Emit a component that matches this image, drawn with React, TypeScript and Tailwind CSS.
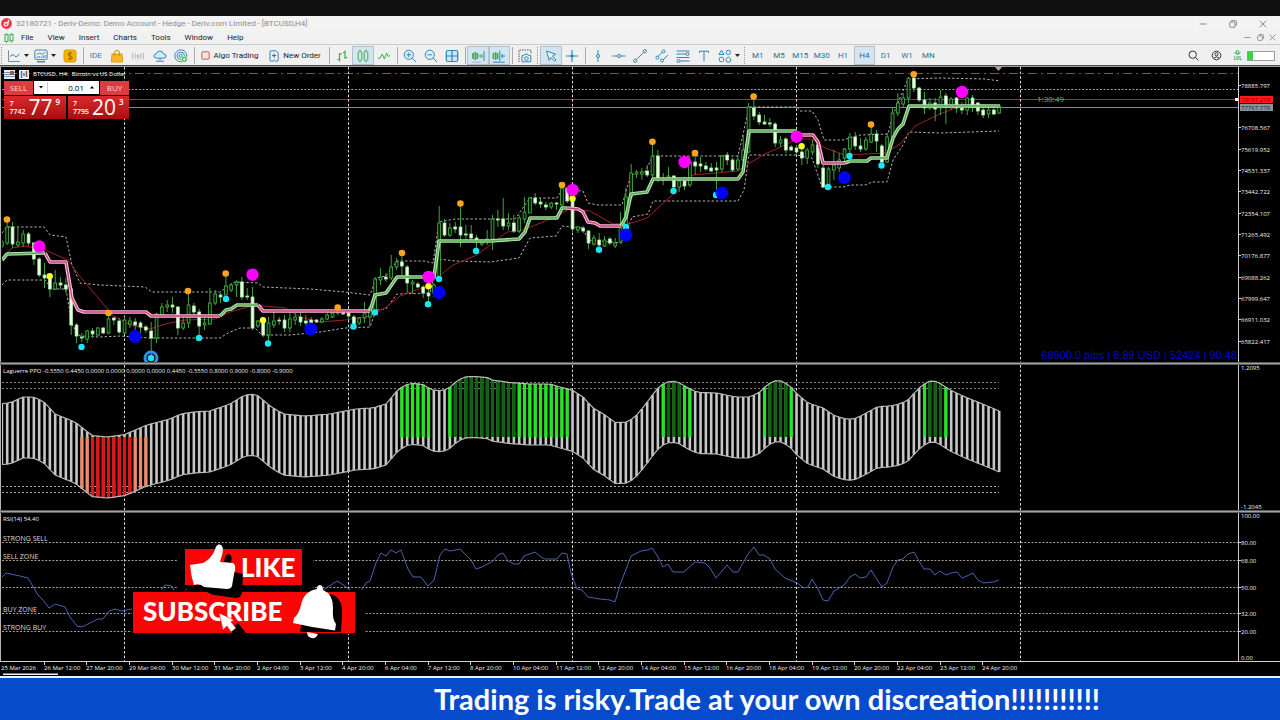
import React from 'react';

type Point = [number, number];
// high, body top, body bottom, low, 1 = filled body
type Candle = [number, number, number, number, number];

const UI_FONT = "font-[Roboto,'Open_Sans',sans-serif]";
const CHART_FONT = "font-['Open_Sans','Noto_Sans',sans-serif]";

const FIRST_X = 7.2;
const STEP = 16 / 3;
const barX = (i: number) => FIRST_X + i * STEP;
const path = (points: Point[]) => points.map((p) => p.join(',')).join(' ');

// First candle sits one step left of FIRST_X
const CANDLES: Candle[] = [
  [240, 242, 246, 248, 0], [221, 227, 243, 245, 0], [222, 227, 244, 248, 1], [227, 242, 245, 247, 0],
  [230, 234, 243, 247, 0], [232, 234, 243, 246, 1], [242, 243, 259, 265, 1], [257, 259, 275, 277, 1],
  [263, 275, 278, 288, 1], [275, 277, 289, 297, 1], [270, 283, 289, 290, 0], [277, 283, 285, 289, 1],
  [278, 285, 289, 293, 1], [287, 289, 325, 335, 1], [323, 325, 336, 343, 1], [333, 337, 338, 342, 1],
  [330, 331, 339, 343, 0], [328, 331, 334, 338, 1], [327, 328, 335, 336, 0], [327, 328, 333, 334, 1],
  [315, 319, 333, 334, 0], [317, 318, 320, 325, 1], [318, 321, 332, 334, 1], [317, 320, 333, 334, 0],
  [317, 321, 324, 328, 0], [318, 322, 325, 330, 1], [321, 323, 327, 333, 1], [325, 327, 330, 333, 1],
  [322, 331, 338, 355, 1], [313, 314, 338, 343, 0], [303, 307, 315, 317, 0], [300, 305, 307, 312, 0],
  [297, 305, 307, 313, 1], [306, 307, 328, 335, 1], [315, 323, 328, 330, 0], [291, 305, 323, 328, 0],
  [303, 306, 312, 317, 1], [309, 312, 326, 338, 1], [315, 323, 325, 330, 0], [288, 303, 324, 325, 0],
  [290, 294, 303, 305, 0], [293, 295, 297, 303, 1], [275, 286, 295, 297, 0], [283, 285, 290, 292, 0],
  [280, 282, 285, 297, 0], [277, 282, 297, 300, 1], [288, 296, 297, 300, 1], [287, 297, 328, 330, 1],
  [320, 321, 326, 328, 0], [318, 321, 335, 337, 1], [317, 323, 335, 343, 0], [312, 321, 325, 328, 0],
  [317, 320, 321, 325, 1], [315, 320, 328, 332, 1], [312, 319, 328, 332, 0], [313, 317, 320, 325, 0],
  [312, 317, 322, 326, 1], [315, 321, 323, 327, 1], [317, 320, 323, 325, 1], [319, 320, 322, 323, 1],
  [317, 319, 322, 323, 0], [313, 315, 319, 320, 0], [312, 313, 317, 318, 0], [307, 311, 313, 315, 0],
  [312, 313, 314, 315, 1], [312, 313, 316, 320, 1], [315, 317, 324, 326, 1], [317, 318, 323, 325, 0],
  [302, 313, 318, 323, 0], [306, 308, 317, 326, 0], [277, 279, 312, 313, 0], [268, 277, 280, 285, 0],
  [273, 277, 279, 282, 1], [255, 267, 278, 280, 0], [258, 262, 267, 270, 0], [253, 262, 266, 277, 1],
  [265, 267, 283, 293, 1], [280, 282, 284, 294, 0], [282, 284, 287, 288, 1], [285, 287, 293, 298, 1],
  [287, 293, 296, 303, 1], [283, 285, 293, 297, 0], [206, 223, 278, 278, 0], [219, 223, 235, 237, 1],
  [223, 228, 235, 237, 0], [222, 227, 229, 233, 1], [204, 227, 235, 247, 1], [225, 234, 235, 242, 1],
  [225, 234, 238, 242, 1], [235, 238, 241, 249, 1], [239, 241, 244, 246, 0], [230, 239, 241, 245, 0],
  [215, 219, 239, 250, 0], [210, 219, 220, 227, 1], [198, 219, 226, 230, 1], [213, 223, 226, 230, 0],
  [215, 223, 231, 233, 1], [215, 218, 231, 233, 0], [197, 212, 219, 223, 0], [197, 198, 213, 213, 0],
  [193, 198, 203, 205, 1], [198, 202, 204, 208, 1], [202, 205, 207, 210, 1], [202, 203, 207, 209, 0],
  [202, 203, 204, 210, 1], [187, 188, 205, 207, 0], [187, 188, 201, 203, 1], [190, 193, 229, 232, 1],
  [226, 227, 230, 233, 0], [226, 228, 231, 233, 1], [230, 231, 243, 249, 1], [235, 238, 244, 246, 0],
  [233, 240, 245, 249, 1], [236, 240, 246, 247, 0], [237, 239, 243, 245, 1], [238, 243, 246, 248, 0],
  [212, 227, 242, 243, 0], [188, 197, 225, 232, 0], [164, 173, 197, 198, 0], [170, 172, 174, 178, 0],
  [168, 172, 174, 180, 0], [165, 171, 175, 177, 1], [142, 156, 175, 178, 0], [150, 156, 178, 182, 1],
  [173, 178, 180, 185, 0], [167, 176, 178, 180, 0], [175, 176, 187, 190, 1], [178, 181, 187, 192, 0],
  [177, 181, 186, 190, 1], [157, 162, 185, 187, 0], [153, 162, 166, 175, 1], [157, 164, 166, 172, 1],
  [162, 166, 169, 171, 1], [163, 168, 171, 172, 1], [162, 168, 170, 193, 1], [155, 156, 169, 172, 0],
  [152, 155, 160, 165, 1], [158, 160, 170, 172, 1], [155, 160, 169, 171, 0], [135, 150, 160, 162, 0],
  [103, 107, 152, 153, 0], [97, 108, 116, 120, 1], [112, 115, 122, 125, 1], [115, 122, 124, 125, 1],
  [118, 123, 124, 127, 1], [122, 124, 143, 147, 1], [136, 140, 143, 147, 0], [137, 139, 150, 153, 1],
  [145, 147, 150, 151, 1], [145, 148, 152, 154, 1], [148, 152, 158, 165, 1], [148, 150, 158, 164, 0],
  [140, 145, 152, 155, 0], [143, 145, 164, 168, 1], [165, 168, 187, 188, 1], [167, 169, 186, 188, 0],
  [150, 165, 170, 180, 0], [153, 160, 168, 172, 0], [148, 149, 158, 162, 0], [133, 137, 149, 153, 0],
  [132, 137, 146, 150, 1], [138, 146, 149, 152, 1], [137, 140, 149, 151, 0], [125, 134, 142, 143, 0],
  [130, 134, 141, 152, 1], [144, 146, 162, 165, 1], [133, 137, 162, 163, 0], [108, 113, 137, 138, 0],
  [93, 103, 113, 116, 0], [93, 98, 104, 107, 0], [77, 78, 98, 103, 0], [77, 78, 88, 92, 1],
  [87, 88, 100, 102, 1], [92, 100, 108, 114, 1], [98, 103, 108, 110, 0], [98, 103, 109, 121, 1],
  [90, 97, 108, 115, 0], [93, 96, 107, 124, 1], [97, 99, 107, 110, 0], [97, 98, 108, 113, 1],
  [102, 108, 110, 114, 1], [97, 98, 110, 115, 0], [95, 98, 107, 112, 1], [102, 103, 111, 115, 1],
  [108, 110, 115, 118, 1], [108, 110, 114, 118, 0], [108, 110, 114, 115, 1], [105, 106, 113, 114, 0],
];

const TREND: { up: boolean; points: Point[] }[] = [
  { up: true, points: [[2, 260], [7, 254], [45, 253]] },
  { up: false, points: [[45, 253], [50, 262], [66, 262], [72, 298], [78, 310], [84, 312], [146, 312], [151, 316], [220, 316]] },
  { up: true, points: [[220, 316], [226, 310], [231, 309], [237, 305], [258, 305]] },
  { up: false, points: [[258, 305], [263, 311], [370, 311]] },
  { up: true, points: [[370, 311], [375, 295], [386, 293], [397, 277], [434, 277], [439, 241], [490, 241], [519, 239], [525, 232], [530, 218], [557, 218], [562, 208], [567, 208]] },
  { up: false, points: [[567, 208], [578, 209], [583, 212], [588, 222], [595, 223], [600, 226], [621, 226]] },
  { up: true, points: [[621, 226], [626, 217], [631, 194], [647, 192], [653, 179], [738, 179], [743, 172], [749, 131], [797, 131]] },
  { up: false, points: [[797, 135], [813, 135], [818, 142], [823, 163], [845, 163]] },
  { up: true, points: [[845, 163], [850, 161], [867, 161], [871, 158], [887, 158], [893, 138], [898, 129], [903, 124], [909, 106], [1000, 106]] },
];

const MA: Point[] = [
  [2, 258], [12, 248], [25, 246], [45, 250], [68, 260], [78, 274], [100, 300], [112, 315], [130, 325], [150, 329],
  [165, 324], [185, 320], [215, 319], [230, 312], [255, 305], [285, 308], [300, 317], [320, 322], [345, 320],
  [370, 316], [385, 308], [400, 296], [425, 287], [453, 265], [477, 255], [507, 232], [520, 231], [543, 222],
  [570, 209], [590, 211], [613, 224], [632, 223], [647, 218], [670, 197], [693, 175], [738, 171], [750, 163],
  [765, 154], [785, 145], [797, 139], [812, 139], [825, 148], [845, 155], [885, 153], [900, 144], [915, 126],
  [940, 114], [965, 104], [1000, 106],
];

const UPPER_BAND: Point[] = [
  [2, 233], [7, 227], [44, 227], [50, 235], [66, 237], [72, 265], [80, 283], [100, 285], [145, 287], [152, 292],
  [220, 292], [235, 282], [258, 283], [263, 287], [310, 289], [345, 292], [370, 295], [376, 278], [386, 276],
  [397, 261], [424, 261], [433, 263], [439, 222], [455, 219], [515, 219], [530, 198], [557, 198], [562, 190],
  [583, 191], [588, 203], [598, 205], [622, 205], [631, 175], [645, 172], [653, 156], [738, 156], [744, 130],
  [749, 107], [797, 107], [800, 111], [812, 111], [818, 120], [824, 140], [843, 140], [860, 135], [888, 134],
  [893, 115], [900, 98], [908, 79], [940, 78], [985, 79], [1000, 81],
];

const LOWER_BAND: Point[] = [
  [2, 285], [7, 280], [45, 280], [52, 289], [66, 289], [72, 325], [80, 336], [100, 337], [120, 336], [150, 338],
  [220, 338], [228, 333], [240, 328], [255, 328], [262, 335], [290, 335], [320, 332], [345, 328], [370, 327],
  [376, 310], [386, 309], [397, 294], [430, 293], [438, 259], [455, 261], [490, 262], [519, 258], [530, 238],
  [556, 236], [562, 226], [583, 228], [588, 240], [622, 243], [632, 217], [648, 214], [653, 201], [738, 201],
  [744, 190], [749, 155], [797, 155], [812, 158], [822, 187], [843, 187], [850, 185], [865, 185], [872, 182],
  [887, 182], [893, 160], [903, 145], [909, 132], [940, 133], [970, 132], [999, 131],
];

const MARKERS: { color: string; r: number; points: Point[] }[] = [
  {
    color: '#ffa31a',
    r: 3.3,
    points: [[7, 219.5], [108.5, 313], [188, 291], [225.7, 273.5], [337.7, 307.5], [402, 253], [460.4, 203.5], [562, 185], [652.4, 141.7], [695, 153], [753.6, 96.5], [871, 124.5], [913.7, 74.3]],
  },
  {
    color: '#19e6f5',
    r: 3.2,
    points: [[81.5, 347], [151, 358], [199, 338], [226, 299], [268, 343.5], [353.5, 326.5], [375, 312.4], [428, 304.3], [439, 279], [476, 251], [599, 249.7], [626, 227], [673.5, 191], [716, 195], [828, 187], [849.5, 156], [881.5, 165.5]],
  },
  { color: '#ffff1f', r: 3.2, points: [[49.7, 276.3], [263, 320.3], [428.5, 286.3], [572.5, 198.5], [801.6, 146.2]] },
  { color: '#ff00ff', r: 6.2, points: [[39.3, 246.5], [252.5, 274.7], [428.6, 277], [572.6, 190], [684.6, 162], [796.6, 136.7], [962, 92]] },
  { color: '#0000ff', r: 6.4, points: [[135, 336.5], [310.8, 329], [439, 292.5], [626, 235], [721.8, 193], [844.5, 177.7]] },
];

const PPO: Point[] = [
  [2, 403.5], [10, 403], [23, 397], [33, 397], [43, 401], [55, 414], [75, 422], [92, 435.5], [108, 437], [125, 434.5],
  [147, 425], [170, 419], [181, 414], [195, 412], [210, 411], [230, 404], [243, 396], [250, 394], [257, 395],
  [270, 406], [283, 414], [305, 416], [330, 414], [355, 409], [373, 408], [386, 404], [397, 391], [405, 385],
  [412, 383.5], [422, 384], [432, 390], [442, 391], [449, 388], [458, 380], [465, 377], [475, 376.5], [487, 377.5],
  [492, 380], [510, 382.5], [530, 384], [550, 384], [560, 387], [572, 390], [583, 397], [593, 408], [605, 415],
  [615, 422.5], [628, 422], [638, 414], [648, 401], [657, 389], [665, 382.5], [672, 381], [678, 382], [688, 388],
  [698, 392.5], [717, 393], [735, 397], [750, 397], [760, 392], [768, 384], [776, 380.5], [782, 381], [790, 386],
  [797, 394], [808, 403], [823, 408], [835, 416], [848, 419.5], [857, 418], [868, 412], [878, 406.5], [890, 406],
  [900, 404], [908, 400], [918, 389], [927, 382], [932, 380.5], [938, 382], [950, 390], [965, 397], [985, 405], [999, 411],
];

const PPO_BAND = 61;
const PPO_ZERO = 437;
const PPO_ZONES: { from: number; to: number; color: string; below?: boolean }[] = [
  { from: 14, to: 15, color: '#ee8a64', below: true },
  { from: 16, to: 23, color: '#e81212', below: true },
  { from: 24, to: 26, color: '#ee8a64', below: true },
  { from: 74, to: 79, color: '#1fe81f' },
  { from: 83, to: 83, color: '#1fe81f' },
  { from: 84, to: 95, color: '#0b650b' },
  { from: 96, to: 105, color: '#1fe81f' },
  { from: 123, to: 123, color: '#1fe81f' },
  { from: 124, to: 126, color: '#0b650b' },
  { from: 127, to: 128, color: '#1fe81f' },
  { from: 142, to: 142, color: '#1fe81f' },
  { from: 143, to: 146, color: '#0b650b' },
  { from: 147, to: 147, color: '#1fe81f' },
  { from: 172, to: 172, color: '#1fe81f' },
  { from: 173, to: 175, color: '#0b650b' },
  { from: 176, to: 176, color: '#1fe81f' },
];

const RSI: Point[] = [
  [2, 577], [6, 573], [20, 576], [28, 578], [38, 595], [43, 600], [49, 608], [55, 604], [65, 607], [70, 617], [77, 626],
  [82, 627], [90, 623], [98, 619], [103, 619], [109, 611], [115, 609], [121, 611], [132, 609], [145, 610], [160, 592],
  [165, 585], [172, 586], [178, 600], [184, 600], [187, 587], [195, 586], [240, 590], [300, 600], [320, 592], [337, 581],
  [345, 586], [355, 594], [361, 591], [366, 583], [370, 581], [376, 563], [381, 553], [386, 556], [391, 550], [396, 553],
  [401, 550], [408, 569], [413, 577], [421, 577], [428, 586], [434, 580], [440, 555], [445, 549], [450, 551], [460, 549],
  [466, 555], [471, 560], [476, 569], [482, 567], [493, 561], [498, 555], [503, 553], [508, 561], [514, 564], [519, 564],
  [524, 556], [535, 552], [541, 557], [545, 559], [557, 559], [562, 553], [567, 554], [571, 573], [577, 589], [582, 590],
  [588, 597], [600, 599], [610, 600], [615, 602], [620, 585], [631, 556], [641, 551], [648, 550], [652, 548], [658, 557],
  [663, 567], [668, 564], [673, 572], [684, 572], [695, 562], [705, 563], [710, 568], [716, 578], [727, 565], [733, 572],
  [738, 572], [748, 554], [754, 547], [759, 555], [764, 555], [770, 559], [775, 569], [785, 578], [797, 583], [804, 588],
  [808, 587], [812, 579], [818, 589], [823, 600], [828, 601], [834, 591], [844, 585], [850, 577], [855, 574], [860, 578],
  [866, 577], [871, 570], [876, 578], [882, 587], [887, 583], [893, 567], [898, 560], [903, 559], [908, 554], [914, 552],
  [919, 561], [924, 569], [930, 569], [935, 575], [940, 571], [946, 575], [951, 573], [957, 572], [962, 578], [967, 576],
  [973, 573], [978, 580], [983, 583], [993, 582], [999, 580],
];

const PRICES: [string, number][] = [
  ['78885.797', 86], ['76708.567', 128], ['75619.952', 150], ['74531.337', 171], ['73442.722', 192], ['72354.107', 214],
  ['71265.492', 235], ['70176.877', 256], ['69088.262', 278], ['67999.647', 299], ['66911.032', 320], ['65822.417', 342],
];

const RSI_LEVELS: { y: number; value: string; label?: string }[] = [
  { y: 542.5, value: '80.00', label: 'STRONG SELL' },
  { y: 560.5, value: '68.00', label: 'SELL ZONE' },
  { y: 587.5, value: '50.00' },
  { y: 613.5, value: '32.00', label: 'BUY ZONE' },
  { y: 631.5, value: '20.00', label: 'STRONG BUY' },
];

const DATES = [
  '25 Mar 2026', '26 Mar 12:00', '27 Mar 20:00', '29 Mar 04:00', '30 Mar 12:00', '31 Mar 20:00', '2 Apr 04:00', '3 Apr 12:00',
  '4 Apr 20:00', '6 Apr 04:00', '7 Apr 12:00', '8 Apr 20:00', '10 Apr 04:00', '11 Apr 12:00', '12 Apr 20:00', '14 Apr 04:00',
  '15 Apr 12:00', '16 Apr 20:00', '18 Apr 04:00', '19 Apr 12:00', '20 Apr 20:00', '22 Apr 04:00', '23 Apr 12:00', '24 Apr 20:00',
];

const WEEKS = [124.5, 348.5, 572.5, 796.5, 1020.5];
const BLUE = '#2f86b8';
const GREEN = '#35b24a';

function interpolate(points: Point[], x: number) {
  const next = points.findIndex((p) => p[0] >= x);
  if (next < 0) return points[points.length - 1][1];
  if (next === 0) return points[0][1];
  const [x0, y0] = points[next - 1];
  const [x1, y1] = points[next];
  return y0 + ((y1 - y0) * (x - x0)) / (x1 - x0);
}

/* ---------- window chrome ---------- */

const WindowControls: React.FC<{ small?: boolean }> = ({ small }) => {
  const size = small ? 7 : 8;
  return (
    <div className={small ? 'flex w-[36px] justify-between pr-1' : 'flex w-[81px] justify-between pr-[13px]'}>
      <button aria-label="Minimize"><svg width={size} height={size} viewBox="0 0 8 8" stroke="#8a8a8a" fill="none"><path d="M0.5 4H7.5" /></svg></button>
      <button aria-label="Restore"><svg width={size} height={size} viewBox="0 0 8 8" stroke="#8a8a8a" fill="none"><rect x="0.7" y="2" width="5.3" height="5.3" rx="1" /><path d="M2.3 1.8V1.3Q2.3 .6 3 .6H6.4Q7.4 .6 7.4 1.6V5Q7.4 5.6 6.2 5.6" /></svg></button>
      <button aria-label="Close"><svg width={size} height={size} viewBox="0 0 8 8" stroke="#8a8a8a" fill="none"><path d="M0.7 0.7L7.3 7.3M7.3 0.7L0.7 7.3" /></svg></button>
    </div>
  );
};

const TitleBar = () => (
  <header className="flex h-[15px] items-center justify-between bg-[#f3f3f3]">
    <div className="flex items-center gap-1 pl-px">
      <svg width="11" height="11" viewBox="0 0 11 11">
        <circle cx="5.5" cy="5.5" r="5.4" fill="#ec3b48" />
        <path d="M7.6 2L6.6 7.7M6.9 4.6H5Q3.6 4.6 3.3 6.2Q3.1 7.8 4.6 7.8Q6.3 7.8 6.7 6.4" stroke="#fff" strokeWidth="1.2" fill="none" />
      </svg>
      <h1 className="text-[8px] leading-[15px] text-[#8c8c8c]">32180721 - Deriv-Demo: Demo Account - Hedge - Deriv.com Limited - [BTCUSD,H4]</h1>
    </div>
    <WindowControls />
  </header>
);

const MenuBar = () => (
  <div className="flex h-[13px] items-center justify-between bg-[#f1f1f1]">
    <nav className="flex items-center gap-[14px] pl-1 text-[8px] leading-[13px] text-[#1b1b1b]">
      <svg className="-mr-[7px]" width="10" height="10" viewBox="0 0 10 10" fill="none" stroke={GREEN}><path d="M2.5 0V10M7.5 0V10" strokeWidth=".8" /><rect x="1" y="1.6" width="3" height="6.8" fill="#f1f1f1" /><rect x="6" y="1.6" width="3" height="6.2" fill="#f1f1f1" /></svg>
      {['File', 'View', 'Insert', 'Charts', 'Tools', 'Window', 'Help'].map((item) => (
        <button key={item}>{item}</button>
      ))}
    </nav>
    <WindowControls small />
  </div>
);

/* ---------- toolbar ---------- */

const Separator = () => <div className="mr-px ml-[2px] h-[17px] w-px shrink-0 bg-[#a9a9a9]" />;
const Handle = () => <div className="mx-px h-[17px] w-[2px] shrink-0 border-l border-dotted border-[#999]" />;
const Caret = () => <svg className="shrink-0" width="5" height="3" viewBox="0 0 5 3"><path d="M0 0H5L2.5 3Z" fill="#222" /></svg>;

const Glyph: React.FC<{ color?: string; children: React.ReactNode }> = ({ color = BLUE, children }) => (
  <svg className="shrink-0" width="14" height="14" viewBox="0 0 14 14" fill="none" stroke={color}>{children}</svg>
);

const ToolButton: React.FC<{ label: string; pressed?: boolean; className?: string; children: React.ReactNode }> = ({ label, pressed, className = '', children }) => (
  <button
    aria-label={label}
    aria-pressed={pressed}
    className={`flex h-[19px] items-center justify-center border ${pressed ? 'border-[#b4c2cc] bg-[#d5e5f0]' : 'border-transparent'} ${className}`}
  >
    {children}
  </button>
);

const Toolbar = () => (
  <div className="flex h-[21px] items-center overflow-hidden border-t border-[#c9c9c9] bg-[#f0f0f0] pt-px text-[8px] text-[#1b1b1b]">
    <Handle />
    <ToolButton label="Chart type" className="w-[27px] gap-[3px]">
      <Glyph color="#7b8b95"><path d="M1.5 1.5V12.5H13" /><path d="M3 7.5L6 5.5L9 8L12.5 5" stroke={BLUE} /></Glyph>
      <Caret />
    </ToolButton>
    <ToolButton label="Indicators" className="w-[28px] gap-[3px]">
      <Glyph color={BLUE}><rect x=".8" y="1" width="12.4" height="9.6" rx="1.5" /><path d="M3 12.8H11" strokeWidth="1.4" /><path d="M2.6 5.4L5.5 4L8 5.4L11.4 3" stroke="#3f9d8c" /><path d="M3.2 9V7.5M5.2 9V7M7.2 9V7.5M9.2 9V6.5M11 9V6" /></Glyph>
      <Caret />
    </ToolButton>
    <ToolButton label="Symbols" className="w-[22px]">
      <Glyph><rect x="1" y="1" width="12" height="12" rx="2" fill="#f4b400" stroke="#d99c00" /><path d="M9.3 4.8Q8.8 3.8 7 3.8Q4.9 3.8 4.9 5.3Q4.9 6.6 7 6.9Q9.2 7.2 9.2 8.6Q9.2 10.2 7 10.2Q5.1 10.2 4.6 9.1M7 2.8V11.2" stroke="#8a6400" /></Glyph>
    </ToolButton>
    <Separator />
    <div className="grid w-[107px] shrink-0 grid-cols-5">
      <ToolButton label="IDE"><span className="text-[8px] text-[#2f7fae]">IDE</span></ToolButton>
      <ToolButton label="Market"><Glyph><path d="M2 5H12L12.6 13H1.4Z" fill="#f4b82a" stroke="#e0a010" /><path d="M4.6 7V4Q4.6 1.3 7 1.3Q9.4 1.3 9.4 4V7" stroke="#c98e10" /></Glyph></ToolButton>
      <ToolButton label="Signals"><Glyph color="#b3b3b3"><circle cx="7" cy="7" r="1.2" /><path d="M4.5 4.5Q3.3 7 4.5 9.5M9.5 4.5Q10.7 7 9.5 9.5M2.2 3.5Q.2 7 2.2 10.5M11.8 3.5Q13.8 7 11.8 10.5M7 8.2V10.5" /></Glyph></ToolButton>
      <ToolButton label="VPS"><Glyph><path d="M3.8 9.2Q.8 9 .9 6.9Q1 5 3.2 4.8Q4 2 6.8 2Q9.6 2 10.2 4.7Q13 4.8 13.1 7Q13 9.2 10.4 9.2Z" fill="#cfe9f7" /><path d="M7 9.2V11.5M3 12.2H11" /></Glyph></ToolButton>
      <ToolButton label="Community"><Glyph><circle cx="6.8" cy="6.8" r="6" /><circle cx="6.8" cy="6.8" r="3.7" /><circle cx="6.8" cy="6.8" r="1.5" /><circle cx="10.2" cy="10.3" r="3" fill="#35b24a" stroke="#fff" strokeWidth=".6" /><path d="M8.6 10.3H11.8M10.2 8.7V11.9" stroke="#fff" /></Glyph></ToolButton>
    </div>
    <Separator />
    <ToolButton label="Algo Trading" className="w-[67px] gap-1 whitespace-nowrap">
      <svg className="shrink-0" width="9" height="9" viewBox="0 0 9 9"><rect x=".8" y=".8" width="7.4" height="7.4" rx="1" fill="#fbe3e0" stroke="#d9574c" /></svg>
      Algo Trading
    </ToolButton>
    <ToolButton label="New Order" className="w-[64px] gap-1 whitespace-nowrap">
      <svg className="shrink-0" width="10" height="12" viewBox="0 0 10 12" fill="none" stroke={BLUE}><path d="M1 2Q1 .8 2.2 .8H7L9.2 3V10Q9.2 11.2 8 11.2H6M1 2V10Q1 11.2 2.2 11.2H4L6 9.4" /><path d="M3 5.6H7.2M5.1 3.6V7.7" stroke="#1f6fa8" /></svg>
      New Order
    </ToolButton>
    <Separator />
    <div className="grid w-[64px] shrink-0 grid-cols-3">
      <ToolButton label="Bar chart"><Glyph color={GREEN}><path d="M4.5 4V12.5M2.2 10.5H4.5M4.5 5H7M10 1.5V10M7.8 3.5H10M10 8.5H12.4" strokeWidth="1.2" /></Glyph></ToolButton>
      <ToolButton label="Candlesticks" pressed><Glyph color={GREEN}><path d="M4 .5V13.5M10 .5V13.5" /><rect x="2.2" y="2.6" width="3.6" height="8.8" rx="1" fill="#d5e5f0" /><rect x="8.2" y="2.6" width="3.6" height="8.8" rx="1" fill="#d5e5f0" /></Glyph></ToolButton>
      <ToolButton label="Line chart"><Glyph color={GREEN}><path d="M1 9.5L3.2 9L5.2 5L7.4 10L9.6 4L11.3 7.5L13 6.5" /></Glyph></ToolButton>
    </div>
    <Separator />
    <div className="grid w-[64px] shrink-0 grid-cols-3">
      <ToolButton label="Zoom in"><Glyph><circle cx="5.8" cy="5.8" r="4.6" fill="#e2f1f9" /><path d="M9.2 9.2L13 13M3.4 5.8H8.2M5.8 3.4V8.2" /></Glyph></ToolButton>
      <ToolButton label="Zoom out"><Glyph><circle cx="5.8" cy="5.8" r="4.6" fill="#e2f1f9" /><path d="M9.2 9.2L13 13M3.4 5.8H8.2" /></Glyph></ToolButton>
      <ToolButton label="Tile windows"><Glyph><rect x="1.3" y="1.5" width="11.4" height="11" rx="1.5" fill="#cbe8f8" strokeWidth="1.2" /><path d="M7 1.5V12.5M1.3 7H12.7" strokeWidth="1.2" /></Glyph></ToolButton>
    </div>
    <Separator />
    <div className="grid w-[43px] shrink-0 grid-cols-2">
      <ToolButton label="Auto scroll" pressed><Glyph color={GREEN}><path d="M2 4V10M4.3 3V11M6.4 4V10" strokeWidth="1.7" /><path d="M7.4 7H11.4M9.6 5L11.5 7L9.6 9" /><path d="M13 2V12" stroke={BLUE} /><path d="M1 13.2H10" stroke="#aabac4" /></Glyph></ToolButton>
      <ToolButton label="Chart shift" pressed><Glyph color={GREEN}><path d="M1.4 4V10M3.6 3V11M5.6 4V10" strokeWidth="1.6" /><path d="M7.8 1.5V12" stroke={BLUE} /><path d="M9.2 7H13M11 5L9.2 7L11 9M1 13.2H13" stroke={BLUE} /></Glyph></ToolButton>
    </div>
    <Separator />
    <ToolButton label="Screenshot" className="w-[22px]"><Glyph><path d="M1 13V1H13V5" stroke="#555" strokeDasharray="1.5 1" /><path d="M4 6.6H5.8L6.8 5.2H9.8L10.8 6.6H12.8V12.8H4Z" fill="#e2f1f9" /><circle cx="8.4" cy="9.6" r="1.8" /></Glyph></ToolButton>
    <Handle />
    <div className="grid w-[43px] shrink-0 grid-cols-2">
      <ToolButton label="Cursor" pressed><Glyph><path d="M2.5 2L11.5 5.2L8.4 7L12 11L10.6 12.3L7 8.5L5.2 11.4Z" fill="#e7f3fa" /></Glyph></ToolButton>
      <ToolButton label="Crosshair"><Glyph><path d="M7 1V13M1 7H13" strokeWidth="1.2" /><path d="M5.6 7H8.4M7 5.6V8.4" strokeWidth="2" /></Glyph></ToolButton>
    </div>
    <Separator />
    <div className="grid w-[128px] shrink-0 grid-cols-6">
      <ToolButton label="Vertical line"><Glyph><path d="M7 1V13" /><circle cx="7" cy="7" r="1.6" fill="#f0f0f0" /></Glyph></ToolButton>
      <ToolButton label="Horizontal line"><Glyph><path d="M.5 7H13.5" /><circle cx="7" cy="7" r="1.6" fill="#f0f0f0" /></Glyph></ToolButton>
      <ToolButton label="Trend line"><Glyph><path d="M2 12L12 2" /><circle cx="2.2" cy="11.8" r="1.6" fill="#f0f0f0" /><circle cx="11.8" cy="2.2" r="1.6" fill="#f0f0f0" /></Glyph></ToolButton>
      <ToolButton label="Channel"><Glyph><path d="M1.5 9L8 2.5M6 13L13 6" /><circle cx="2.4" cy="8.6" r="1.5" fill="#f0f0f0" /><circle cx="8.5" cy="2.4" r="1.5" fill="#f0f0f0" /><circle cx="7" cy="11.5" r="1.5" fill="#f0f0f0" /></Glyph></ToolButton>
      <ToolButton label="Fibonacci"><Glyph><path d="M.5 2H13.5M.5 5H10M.5 8.5H13.5M4 12H13.5" /><circle cx="11.5" cy="5" r="1.5" fill="#f0f0f0" /><circle cx="2.5" cy="12" r="1.5" fill="#f0f0f0" /></Glyph></ToolButton>
      <ToolButton label="Text"><Glyph><path d="M2.5 4V2.2H11.5V4M7 2.2V12.4" /></Glyph></ToolButton>
    </div>
    <ToolButton label="Objects" className="w-[28px] gap-[3px]">
      <Glyph><path d="M3.5 1.2L6 5.5H1Z" /><circle cx="10.3" cy="3.4" r="2.2" /><rect x="1.4" y="8.4" width="4.2" height="4.2" rx="1" /><path d="M10.3 8L13 10.4L11.8 13H8.8L7.6 10.4Z" /></Glyph>
      <Caret />
    </ToolButton>
    <Handle />
    <div className="grid w-[192px] shrink-0 grid-cols-9 text-[#2a6f93]">
      {['M1', 'M5', 'M15', 'M30', 'H1', 'H4', 'D1', 'W1', 'MN'].map((frame) => (
        <ToolButton key={frame} label={frame} pressed={frame === 'H4'}>{frame}</ToolButton>
      ))}
    </div>
    <div className="ml-auto flex items-center gap-3 pr-[5px]">
      <button aria-label="Search"><svg width="11" height="11" viewBox="0 0 11 11" fill="none" stroke="#333"><circle cx="4.7" cy="4.7" r="3.7" /><path d="M7.5 7.5L10.4 10.4" /></svg></button>
      <button aria-label="Account"><svg width="11" height="11" viewBox="0 0 11 11" fill="none" stroke="#333"><circle cx="5.5" cy="5.5" r="4.3" /><circle cx="5.5" cy="4.3" r="1.5" /><path d="M2.6 8.2Q5.5 5.4 8.4 8.2" /></svg></button>
      <div className="flex items-center gap-[5px]">
        <div className="flex flex-col items-center text-[5px] leading-[5px] font-bold text-[#35b24a]">
          <svg width="7" height="6" viewBox="0 0 7 6" fill="none" stroke={GREEN}><circle cx="3.5" cy="2" r="1.5" /><path d="M.5 2.5Q3.5 6 6.5 2.5" /></svg>
          LVL
        </div>
        <div className="h-[10px] w-[28px] border border-[#9a9a9a] bg-white"><div className="h-full w-[5px] bg-[#3ed13e]" /></div>
      </div>
    </div>
  </div>
);

/* ---------- chart panes ---------- */

const WeekLines: React.FC<{ top: number; bottom: number }> = ({ top, bottom }) => (
  <g stroke="#d8d8d8" strokeDasharray="2.6 2">
    {WEEKS.map((x) => <path key={x} d={`M${x} ${top}V${bottom}`} />)}
  </g>
);

const Pane: React.FC<{ plot: React.ReactNode; axis: React.ReactNode; height: string; top: number; children?: React.ReactNode }> = ({ plot, axis, height, top, children }) => (
  <section className={`relative flex border-l border-[#b5b5b5] pl-px ${height}`}>
    <svg className="h-full min-w-0 flex-1 overflow-hidden" fill="none">
      <g transform={`translate(-2 ${-top})`}>{plot}</g>
    </svg>
    <svg className="h-full w-[42px] shrink-0 border-l border-[#d0d0d0]" fill="#f2f2f2" fontSize="6">
      <g transform={`translate(0 ${-top})`}>{axis}</g>
    </svg>
    {children}
  </section>
);

const AxisLabel: React.FC<{ y: number; text: string; tick?: boolean }> = ({ y, text, tick = true }) => (
  <>
    {tick && <path d={`M0 ${y - 0.5}H2`} stroke="#d0d0d0" />}
    <text x="2" y={y + 2}>{text}</text>
  </>
);

const PricePlot = () => (
  <>
    <path d="M2 73.5H4000" stroke="#c8303e" strokeDasharray="9 4 2 4" />
    <path d="M2 89.5H4000" stroke="#a0a0a0" strokeDasharray="2 1.6" />
    <path d="M2 99.5H4000" stroke="#e01818" strokeWidth="1.2" />
    <path d="M2 107.5H4000" stroke="#7d8994" />
    <WeekLines top={67} bottom={362} />
    <g stroke="#c4c4c4" strokeWidth=".9" strokeDasharray="2.4 2">
      <polyline points={path(UPPER_BAND)} />
      <polyline points={path(LOWER_BAND)} />
    </g>
    <polyline points={path(MA)} stroke="#a01f28" />
    {CANDLES.map(([high, top, bottom, low, filled], i) => {
      const x = barX(i - 1);
      return (
        <g key={i} stroke="#3fa33f">
          <path d={`M${x} ${high}V${low}`} />
          <rect x={x - 1.4} y={top} width="2.8" height={Math.max(bottom - top, 1)} fill={filled ? '#f4fff0' : '#001800'} stroke={filled ? '#a8e6a0' : '#4cb84c'} strokeWidth=".8" />
        </g>
      );
    })}
    {TREND.map(({ up, points }, i) => (
      <g key={i} strokeLinejoin="round">
        <polyline points={path(points)} stroke={up ? '#b0e4aa' : '#ffb8d8'} strokeWidth="3.6" />
        <polyline points={path(points)} stroke={up ? '#5fa85c' : '#c2447c'} strokeWidth="1.3" />
      </g>
    ))}
    <circle cx="151" cy="358" r="6" stroke="#2f8fe8" strokeWidth="3" />
    {MARKERS.map(({ color, r, points }) => (
      <g key={color} fill={color}>
        {points.map(([x, y]) => <circle key={x} cx={x} cy={y} r={r} />)}
      </g>
    ))}
    <path d="M995 67H1002L998.5 71Z" fill="#a8a8a8" />
    <rect x="1235" y="98" width="3" height="3" fill="#fff" />
    <text x="1037" y="102" fontSize="8" fill="#6fae70">1:30:49</text>
  </>
);

const PriceAxis = () => (
  <>
    {PRICES.map(([text, y]) => <AxisLabel key={text} y={y} text={text} />)}
    <rect x="1" y="96" width="33" height="7" fill="#ff1a1a" />
    <text x="2" y="102" fill="#8a0000">78157.219</text>
    <rect x="1" y="104" width="33" height="7" fill="#8794a0" />
    <text x="2" y="110" fill="#10202c">77767.779</text>
  </>
);

const OscillatorPlot = () => {
  const bars = Array.from({ length: 188 }, (_, n) => n - 1);
  const curve = bars.map((i): Point => [barX(i), interpolate(PPO, barX(i))]);
  return (
    <>
      <g stroke="#8f807a" strokeDasharray="2 2">
        <path d="M2 382.5H999M2 388.5H999" />
        <path d="M2 486.5H999M2 492.5H999" stroke="#a8a8a8" />
      </g>
      <WeekLines top={365} bottom={510} />
      {curve.map(([x, y], n) => {
        const zone = PPO_ZONES.find((z) => n - 1 >= z.from && n - 1 <= z.to);
        return (
          <g key={n} strokeWidth="2.6">
            <path d={`M${x} ${y}V${y + PPO_BAND}`} stroke="#c6c6c6" />
            {zone && <path d={zone.below ? `M${x} ${PPO_ZERO}V${y + PPO_BAND}` : `M${x} ${y}V${PPO_ZERO}`} stroke={zone.color} strokeWidth="3.2" />}
          </g>
        );
      })}
      <g stroke="#b9b9b9" strokeWidth="1.2">
        <polyline points={path(curve)} />
        <polyline points={path(curve.map(([x, y]): Point => [x, y + PPO_BAND]))} />
      </g>
      <text x="3" y="373" fontSize="6" fill="#f2f2f2">Laguerre PPO -0.5550 0.4450 0.0000 0.0000 0.0000 0.0000 0.4450 -0.5550 0.8000 0.9000 -0.8000 -0.9000</text>
    </>
  );
};

const RsiPlot = () => (
  <>
    {RSI_LEVELS.map(({ y, label }) => (
      <g key={y}>
        <path d={`M2 ${y}H4000`} stroke="#a89f92" strokeDasharray="2 1.6" />
        {label && <text x="3" y={y - 2} fontSize="7" fill="#dedede">{label}</text>}
      </g>
    ))}
    <WeekLines top={513} bottom={661} />
    <polyline points={path(RSI)} stroke="#4a62ad" />
    <text x="3" y="521" fontSize="6" fill="#f2f2f2">RSI(14) 54.40</text>
  </>
);

/* ---------- things that float over the chart ---------- */

const PriceTile: React.FC<{ lead: string; rest: string; big: string; pip: string }> = ({ lead, rest, big, pip }) => (
  <button className="flex h-[23px] flex-1 items-center justify-center gap-[3px] bg-linear-to-b from-[#d92a2c] to-[#a80c10]">
    <span className="text-left text-[7px] leading-[8px] font-semibold">{lead}<br />{rest}</span>
    <span className="text-[21px] leading-[23px]">{big}</span>
    <span className="self-start pt-px text-[8px] leading-[10px] font-semibold">{pip}</span>
  </button>
);

const TradePanel = () => (
  <div className="absolute top-[2px] left-[3px] text-white">
    <div className="flex h-[11px] items-center gap-1">
      <svg width="11" height="9" viewBox="0 0 11 9"><rect width="11" height="9" fill="#e9eef2" /><path d="M0 2.5H11M0 4.5H11M0 6.5H11" stroke="#4a7fa8" strokeWidth=".8" /><rect x="6" y="1" width="4" height="4" fill="#b0524c" /></svg>
      <svg width="10" height="9" viewBox="0 0 10 9"><rect width="10" height="9" fill="#e9eef2" /><path d="M2.5 1V8M5 3V6" stroke="#2f7fd0" strokeWidth="1.5" /><path d="M7.5 1V7" stroke="#d03838" strokeWidth="1.5" /></svg>
      <span className="text-[6px] leading-[11px] whitespace-pre">BTCUSD, H4:  Bitcoin vs US Dollar</span>
    </div>
    <div className="mt-px w-[125px] bg-black">
      <div className="flex h-[14px] items-stretch">
        <button className="w-[29px] bg-[#de3a3f] text-[8px] leading-[14px] text-[#ffd9d9]">SELL</button>
        <div className="mx-px flex h-[13px] flex-1 items-center bg-white text-black">
          <button aria-label="Decrease volume" className="flex w-[13px] justify-center"><svg width="4" height="3" viewBox="0 0 4 3"><path d="M0 0H4L2 2.5Z" /></svg></button>
          <input aria-label="Volume" defaultValue="0.01" className="h-[11px] w-0 min-w-0 flex-1 border-l border-[#ccc] text-right text-[8px] leading-[11px]" />
          <button aria-label="Increase volume" className="flex w-[15px] justify-center"><svg width="4" height="3" viewBox="0 0 4 3"><path d="M0 2.5H4L2 0Z" /></svg></button>
        </div>
        <button className="w-[29px] bg-[#de3a3f] text-[8px] leading-[14px] text-[#ffd9d9]">BUY</button>
      </div>
      <div className="mt-px flex gap-[2px]">
        <PriceTile lead="7" rest="7742" big="77" pip="9" />
        <PriceTile lead="7" rest="7795" big="20" pip="3" />
      </div>
    </div>
  </div>
);

const Promo = () => (
  <svg className="absolute top-[29px] left-[131px] font-[Lato,'Open_Sans',sans-serif]" width="234" height="100" viewBox="132 542 234 100">
    <rect x="177" y="544" width="136" height="45" fill="#000" />
    <rect x="132" y="590" width="233" height="44" fill="#000" />
    <rect x="185" y="549" width="117" height="36" fill="#f90505" />
    <rect x="133" y="592" width="222" height="41" fill="#f90505" />
    <path d="M224 562Q225 554 229 554Q233 555 231 563ZM210 580L234 572L243 574L242 592Q241 598 236 598L214 595Q206 593 203 587Z" fill="#000" />
    <path d="M190 565L203 563Q211 559 215 550Q216 544 220 544.5Q224 546 222.5 553L220 562L233 563Q237 566 234 574L232 586Q231 589 227 589L204 587Q200 583 194 585Q191 576 190 565Z" fill="#fff" />
    <text x="241" y="577" fontSize="26" fontWeight="900" fill="#fff">LIKE</text>
    <text x="143" y="621" fontSize="26" fontWeight="900" fill="#fff">SUBSCRIBE</text>
    <path d="M229 629L238 623L246 633H232Z" fill="#000" />
    <path d="M219 613L234 620L231 622L236 628L231 632L227 626L223 630Z" fill="#fff" stroke="#f90505" strokeWidth=".6" />
    <path d="M331 594Q343 598 342 614L341 632H300L302 622Z" fill="#000" />
    <path d="M317 589Q317 585 320 585Q323 585.5 323 590Q333 594 333 608Q332 619 336 624L335 630.5Q314 628 293 623L294 618Q299 614 301 605Q304 591 317 589Z" fill="#fff" />
    <path d="M307 632L318 634Q316 639 311.5 638Q307 637 307 632Z" fill="#fff" />
  </svg>
);

const TimeAxis = () => (
  <div className="h-[15px] border-t border-[#d0d0d0] pb-px">
    <svg className="h-[13px] w-full" fill="#f0f0f0" fontSize="6">
      {DATES.map((date, i) => (
        <g key={date}>
          {i > 0 && <path d={`M${1.5 + Math.round((i * 128) / 3)} 0V3`} stroke="#d0d0d0" />}
          <text x={1 + Math.round((i * 128) / 3)} y="8">{date}</text>
        </g>
      ))}
      <path d="M3 12.5H58" stroke="#f4f4f4" strokeWidth="2" />
    </svg>
  </div>
);

const Divider = () => <div className="h-[3px] shrink-0 border-y border-[#5c5c5c] bg-[#a2a2a2]" />;

export default function App() {
  return (
    <div className={`flex min-h-screen w-full flex-col overflow-hidden bg-black ${UI_FONT}`}>
      <div className="h-[16px] bg-[#101010]" />
      <TitleBar />
      <MenuBar />
      <Toolbar />
      <main className={`flex-1 ${CHART_FONT}`}>
        <div className="h-[2px] border-b border-[#9a9a9a] bg-[#505050]" />
        <Pane top={67} height="h-[295px]" plot={<PricePlot />} axis={<PriceAxis />}>
          <TradePanel />
          <p className="absolute right-[43px] bottom-0 font-['Liberation_Sans',Arial,sans-serif] text-[11px] leading-[14px] text-[#0404c4]">
            68900.0 pips | 8.89 USD | 52424 | 90:48
          </p>
        </Pane>
        <Divider />
        <Pane
          top={365}
          height="h-[145px]"
          plot={<OscillatorPlot />}
          axis={<><AxisLabel y={368} text="1.2095" tick={false} /><AxisLabel y={507} text="-1.2045" tick={false} /></>}
        />
        <Divider />
        <Pane
          top={513}
          height="h-[148px]"
          plot={<RsiPlot />}
          axis={
            <>
              <AxisLabel y={516} text="100.00" tick={false} />
              {RSI_LEVELS.map(({ y, value }) => <AxisLabel key={value} y={Math.round(y)} text={value} />)}
              <AxisLabel y={658} text="0.00" tick={false} />
            </>
          }
        >
          <Promo />
        </Pane>
        <TimeAxis />
      </main>
      <footer className="border-t-2 border-[#eef4ff] bg-[#064bcb]">
        <p className="pl-[434px] font-[Lato,'Open_Sans',sans-serif] text-[29px] leading-[42px] font-bold whitespace-nowrap text-white">
          Trading is risky.Trade at your own discreation!!!!!!!!!!!
        </p>
      </footer>
    </div>
  );
}
